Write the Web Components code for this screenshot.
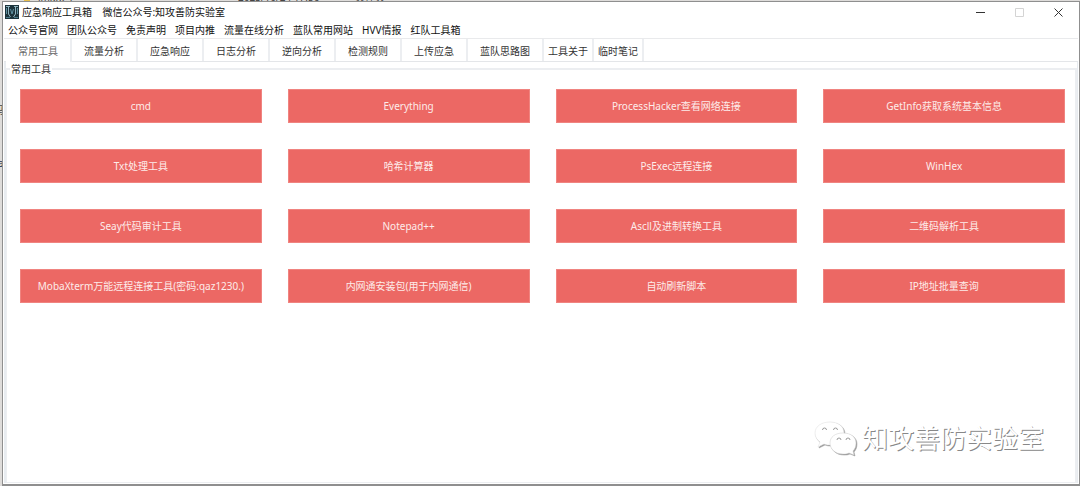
<!DOCTYPE html>
<html lang="zh-CN">
<head>
<meta charset="utf-8">
<title>应急响应工具箱</title>
<style>
html,body{margin:0;height:100%}
body{font:10px/16px "Noto Sans","Noto Sans CJK SC",sans-serif;color:#222;background:#dedcda;overflow:hidden}
</style>
</head>
<body>
<toolbox-app></toolbox-app>
<script>
class Base extends HTMLElement{
  constructor(){super();this.attachShadow({mode:'open'}).innerHTML=this.view()}
}
customElements.define('desktop-scraps',class extends Base{
  view(){return `<style>
:host{position:absolute;inset:0;overflow:hidden;color:#444;pointer-events:none}
span{position:absolute;white-space:nowrap}
i{position:absolute;left:24px;top:0;width:6px;height:2px;background:#e9bf4d}
</style><i></i><span style="left:38px;top:-10px">images</span><span style="left:238px;top:-11px">2023/10/24 17:56</span><span style="left:355px;top:-11px">文件夹</span><span style="left:-6px;top:102px">码</span><span style="left:-2px;top:155px;color:#235">a</span>`}
});
customElements.define('title-bar',class extends Base{
  view(){return `<style>
:host{display:flex;align-items:center;height:20px;padding-left:1px}
.logo{width:14px;height:14px;margin-right:3px}
h1{flex:1;margin:0;font:inherit;white-space:pre;color:#111}
button{width:39px;height:20px;padding:0;border:0;background:none;display:grid;place-items:center}
</style>
<svg class="logo" viewBox="0 0 14 14"><path fill="#1d343c" d="M0 0h14v14H0z"/><path fill="none" stroke="#8fb4bf" d="M1 1.500h4M9 1.500h4M3.500 1v8l2 3M10.500 1v8l-2 3"/><path fill="none" stroke="#5e8f9f" d="M5.500 4l1.500 5 1.500-5M1.500 3v6M12.500 3v6"/><path fill="none" stroke="#4b7a8a" d="M1 12.500h4M9 12.500h4"/></svg>
<h1><slot></slot></h1>
<button aria-label="最小化"><svg width="9" height="9"><path stroke="#333" d="M0 4.500h9"/></svg></button>
<button aria-label="最大化" disabled><svg width="9" height="9"><path fill="none" stroke="#d4d4d4" d="M.5.5h8v8h-8z"/></svg></button>
<button aria-label="关闭"><svg width="9" height="9"><path stroke="#333" d="M.5.5l8 8M8.500.5l-8 8"/></svg></button>`}
});
customElements.define('menu-bar',class extends Base{
  view(){return `<style>
:host{display:block;border-bottom:1px solid #e9eaec}
nav{display:flex;gap:9px;height:16px;padding-left:4px}
</style><nav><slot></slot></nav>`}
});
customElements.define('menu-entry',class extends Base{
  view(){return `<style>
:host{display:block}
button{font:inherit;color:#111;border:0;padding:0;background:none;white-space:nowrap;display:block}
</style><button><slot></slot></button>`}
});
customElements.define('tab-strip',class extends Base{
  view(){return `<style>
:host{display:flex;height:22px;padding-left:2px;border-bottom:1px solid #e4e6e9}
</style><slot></slot>`}
});
customElements.define('tab-item',class extends Base{
  view(){return `<style>
:host{display:block}
button{font:inherit;color:#333;height:22px;padding:2px 12px 0;border:0;border-right:2px solid #eceef1;background:none;white-space:nowrap;display:block}
:host([tight]) button{padding:2px 4px 0}
:host([selected]) button{color:#666;height:23px;padding:0 12px;background:#fff}
</style><button role="tab"><slot></slot></button>`}
});
customElements.define('tool-group',class extends Base{
  view(){return `<style>
:host{display:flex;flex:1;border-left:2px solid #e8ecf0;border-right:1px solid #e8ecf0}
fieldset{flex:1;min-width:0;margin:0;padding:13px 10px 13px 13px;border:2px solid #eceef1;border-left-width:1px;border-bottom-width:1px}
legend{padding:0 1px;margin-left:-10px;line-height:14px;color:#333}
div{display:grid;grid-template-columns:repeat(4,1fr);gap:26px}
</style><fieldset><legend>常用工具</legend><div><slot></slot></div></fieldset>`}
});
customElements.define('tool-button',class extends Base{
  view(){return `<style>
:host{display:block}
button{width:100%;height:34px;padding:0;border:1px solid #f08480;background:#ec6864;color:#fdecea;font:inherit;white-space:nowrap;display:block}
</style><button><slot></slot></button>`}
});
customElements.define('account-mark',class extends Base{
  view(){return `<style>
:host{position:absolute;right:36px;bottom:30px;display:flex;align-items:center;gap:4px;font:26px/38px "Noto Sans CJK SC",sans-serif;color:#fff;text-shadow:1px 1px 0 #888;pointer-events:none}
svg{filter:drop-shadow(1px 1px 0 #999)}
</style>
<svg width="44" height="38" viewBox="0 0 44 38"><path fill="#fff" stroke="#ddd" stroke-width=".5" d="M16 4C8 4 1 8 1 15c0 4 2 7 5 9l-2 5 6-3c2 1 5 1 7 1 8 0 13-5 13-12S24 4 16 4z"/><path fill="#fff" stroke="#ccc" stroke-width=".5" d="M29 15c-8 0-13 4-13 10s5 11 13 11c2 0 4 0 6-1l5 2-1-4c2-2 3-5 3-8 0-6-5-10-13-10z"/><path fill="none" stroke="#999" d="M8.500 12a2 2 0 0 1 4 0M19.500 12a2 2 0 0 1 4 0M23 22a2 2 0 0 1 4 0M32 22a2 2 0 0 1 4 0"/></svg><slot></slot>`}
});
customElements.define('toolbox-app',class extends Base{
  view(){
    const menu=['公众号官网','团队公众号','免责声明','项目内推','流量在线分析','蓝队常用网站','HVV情报','红队工具箱'];
    const tabs=['常用工具','流量分析','应急响应','日志分析','逆向分析','检测规则','上传应急','蓝队思路图','工具关于','临时笔记'];
    const tools=['cmd','Everything','ProcessHacker查看网络连接','GetInfo获取系统基本信息','Txt处理工具','哈希计算器','PsExec远程连接','WinHex','Seay代码审计工具','Notepad++','Ascll及进制转换工具','二维码解析工具','MobaXterm万能远程连接工具(密码:qaz1230.)','内网通安装包(用于内网通信)','自动刷新脚本','IP地址批量查询'];
    return `<style>
:host{display:flex;height:100vh;box-sizing:border-box;padding:1px 0 0 2px;position:relative}
main{flex:1;min-width:0;display:flex;flex-direction:column;background:#fff;border:1px solid #8f8f8f;border-bottom-width:2px;padding:0 1px 1px;z-index:1}
</style><desktop-scraps></desktop-scraps>
<main><title-bar>应急响应工具箱    微信公众号:知攻善防实验室</title-bar>
<menu-bar>${menu.map(t=>`<menu-entry>${t}</menu-entry>`).join('')}</menu-bar>
<tab-strip role="tablist">${tabs.map((t,i)=>`<tab-item${i===0?' selected':''}${i>7?' tight':''}>${t}</tab-item>`).join('')}</tab-strip>
<tool-group>${tools.map(t=>`<tool-button>${t}</tool-button>`).join('')}</tool-group>
<account-mark>知攻善防实验室</account-mark></main>`}
});
</script>
</body>
</html>
